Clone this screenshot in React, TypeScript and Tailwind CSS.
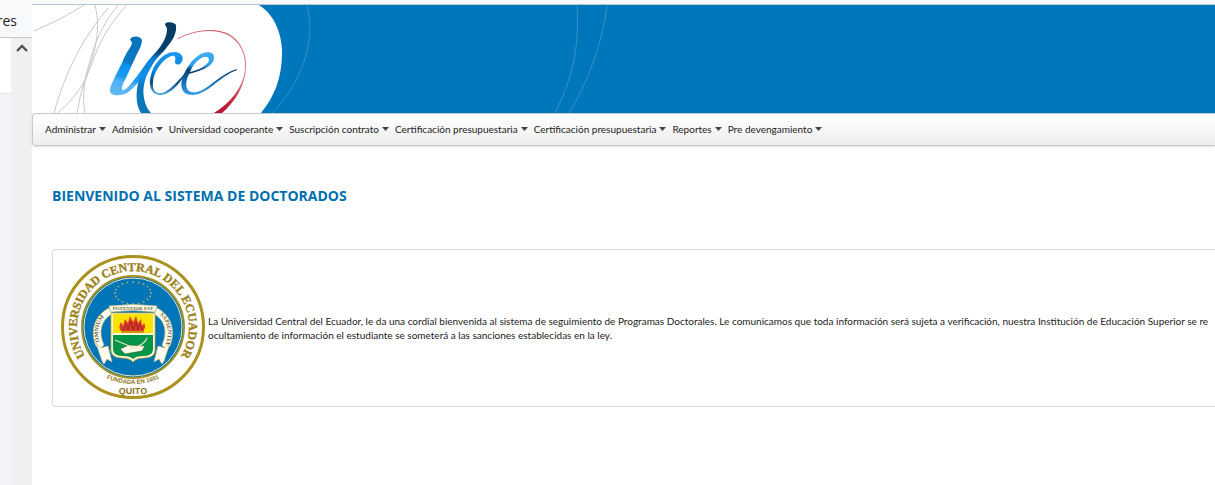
import React from "react";

const menus = [
  "Administrar",
  "Admisión",
  "Universidad cooperante",
  "Suscripción contrato",
  "Certificación presupuestaria",
  "Certificación presupuestaria",
  "Reportes",
  "Pre devengamiento",
];

function Banner() {
  return (
    <svg viewBox="0 0 1183 108" preserveAspectRatio="xMinYMin slice" className="block h-[108px] w-full bg-[#0076bd]" role="img" aria-label="UCE">
      <defs>
        <linearGradient id="stem" x1="0.6" y1="0" x2="0.4" y2="1">
          <stop offset="0" stopColor="#0a72b8" />
          <stop offset=".45" stopColor="#0878c4" />
          <stop offset=".52" stopColor="#0c92ea" />
          <stop offset=".72" stopColor="#1c9cf0" />
          <stop offset=".8" stopColor="#4fb0f4" />
          <stop offset="1" stopColor="#5db8f5" />
        </linearGradient>
        <linearGradient id="tall" x1="0" y1="0" x2="0" y2="1">
          <stop offset="0" stopColor="#063b63" />
          <stop offset=".32" stopColor="#06416c" />
          <stop offset=".4" stopColor="#0a80d4" />
          <stop offset=".6" stopColor="#1290ea" />
          <stop offset=".72" stopColor="#0876b8" />
          <stop offset="1" stopColor="#0876b8" />
        </linearGradient>
        <linearGradient id="curveC" x1="0" y1="0" x2="0" y2="1">
          <stop offset="0" stopColor="#1b98ee" />
          <stop offset=".45" stopColor="#0785dc" />
          <stop offset=".7" stopColor="#0a4a7a" />
          <stop offset="1" stopColor="#4aa8e8" />
        </linearGradient>
        <linearGradient id="curveE" x1="0" y1="0" x2="0" y2="1">
          <stop offset="0" stopColor="#46aef5" />
          <stop offset=".3" stopColor="#2a9fee" />
          <stop offset=".42" stopColor="#063f6c" />
          <stop offset=".6" stopColor="#0a5e9c" />
          <stop offset="1" stopColor="#36a2ee" />
        </linearGradient>
        <linearGradient id="ring" x1="0" y1="0" x2="0" y2="1">
          <stop offset="0" stopColor="#d05562" />
          <stop offset=".15" stopColor="#d9707a" />
          <stop offset=".6" stopColor="#dc7c86" />
          <stop offset=".85" stopColor="#c02a40" />
          <stop offset="1" stopColor="#b5172e" />
        </linearGradient>
      </defs>
      <path d="M0 0H227C243 10 250 30 250 48C250 73 242 92 229 108H0Z" fill="#fff" />
      <path
        d="M2 26C20 18 37 10 52 0M63 0C70 28 61 52 54 72C49 86 47 98 45 108M76 3C50 34 33 68 22 108M86 0C66 25 61 45 54 70C51 84 51 97 53 108M95 0C65 32 62 57 53 75C45 90 36 99 26 108"
        fill="none"
        stroke="#c8c8c8"
      />
      <path d="M275 0C285 39 267 81 240 108M545 0C548 45 539 76 523 108M575 0C570 42 553 82 537 108" fill="none" stroke="#5ca3cc" opacity=".6" />
      <path d="M98 34C101 30 109 31 110 35C110 40 107 45 105 49L93 75C89 82 89 86 92 85C98 82 107 68 117 55L120 57C109 74 99 90 88 90C82 91 77 89 78 84C79 78 89 61 92 53C96 45 99 42 100 38C100 36 98 36 98 34Z" fill="url(#stem)" />
      <path d="M133 19C134 16 143 17 144 20C145 29 140 36 135 42C130 49 125 52 121 59C113 72 110 81 112 93C113 99 115 104 119 108H109C103 99 104 85 107 74C110 62 118 53 125 46C131 39 135 31 135 24C135 22 133 21 133 19Z" fill="url(#tall)" />
      <path d="M149 58C146 61 142 59 143 56C144 53 143 50 140 51C133 52 122 65 121 77C120 88 126 90 133 87C140 83 146 76 153 68L154 69C146 80 139 89 129 90C119 90 116 80 119 70C122 58 132 47 142 47C150 47 153 53 149 58Z" fill="url(#curveC)" />
      <path fillRule="evenodd" d="M158 67C168 65 177 59 177 55C177 51 172 51 168 54C163 57 160 62 158 67ZM157 69C153 77 153 85 159 87C173 90 183 71 205 64V65C186 72 176 90 160 90C148 90 147 78 153 67C158 56 168 47 176 47C184 47 184 56 177 61C171 65 164 67 157 69Z" fill="url(#curveE)" />
      <path d="M146 33C163 25 182 22 197 29C209 36 215 49 214 63C213 81 203 97 190 108H182C198 98 212 82 213 63C214 49 208 37 196 30C181 23 162 26 146 34Z" fill="url(#ring)" />
    </svg>
  );
}

const stars = Array.from({ length: 20 }, (_, i) => ({
  x: 72 + Math.cos((i * Math.PI) / 10) * 18,
  y: 38 + Math.sin((i * Math.PI) / 10) * 11,
}));

function Seal() {
  return (
    <svg viewBox="0 0 144 144" className="size-36 shrink-0" role="img" aria-label="Universidad Central del Ecuador">
      <defs>
        <path id="outer" d="M26 104A56 56 0 1 1 118 104" />
        <path id="founded" d="M40 121Q72 137 104 121" />
        <path id="leftMotto" d="M41 93Q31 71 48 57" />
        <path id="rightMotto" d="M96 57Q113 71 103 93" />
      </defs>
      <circle cx="72" cy="72" r="70.500" fill="#fff" stroke="#aa911d" strokeWidth="3" />
      <circle cx="72" cy="72" r="51" fill="#0075b8" stroke="#aa911d" strokeWidth="2" />
      <circle cx="72" cy="72" r="49" fill="none" stroke="#e9e3bd" />
      <text className="fill-[#9d841c] stroke-[#9d841c] stroke-[0.4] font-['Liberation_Serif',serif] text-[12px] font-bold">
        <textPath href="#outer" startOffset="50%" textAnchor="middle">UNIVERSIDAD CENTRAL DEL ECUADOR</textPath>
      </text>
      <g fill="#a9b55e">
        {stars.map((s, i) => (
          <circle key={i} cx={s.x} cy={s.y} r=".9" />
        ))}
      </g>
      <g fill="#fffdf0" stroke="#c9bf84" strokeWidth=".7">
        <path d="M48 53C33 61 29 76 35 91L40 93L43 90C37 77 40 65 51 59Z" />
        <path d="M96 53C111 61 115 76 109 91L104 93L101 90C107 77 104 65 93 59Z" />
        <path d="M35 88L40 93L47 91L51 107L46 104L43 109L41 106Z" />
        <path d="M109 88L104 93L97 91L93 107L98 104L101 109L103 106Z" />
        <path d="M48 51Q72 48 96 51L94 57Q72 54 50 57Z" />
      </g>
      <path d="M50 58H94V96Q93 103 83 103Q75 103 72 107Q69 103 61 103Q51 103 50 96Z" fill="#fff7d8" stroke="#c7a928" strokeWidth=".8" />
      <path d="M52 59H92V78H52Z" fill="#fbe300" />
      <path d="M52 80H92V95Q91 101 82 101Q75 101 72 104Q69 101 62 101Q53 101 52 95Z" fill="#05954a" />
      <path d="M60 76C57 72 59 70 60 67L62 71L64 64L67 68L69 61L72 67L75 61L77 68L80 64L81 71L83 68C85 71 84 74 82 76Z" fill="#e0382a" />
      <path d="M62 76L65 69L67 75L70 66L72 75L75 67L77 75L79 69L82 76M60 77H83" fill="none" stroke="#8a2a1a" strokeWidth=".8" />
      <path d="M59 94L68 90L84 91L81 96L64 99Z" fill="#fffbe6" stroke="#295d37" strokeWidth=".6" />
      <path d="M54 85L73 93M86 83Q83 91 69 94" fill="none" stroke="#e9e5b8" strokeWidth="1.2" />
      <text className="fill-[#6b6238] font-['Liberation_Serif',serif] text-[6px] font-bold">
        <textPath href="#leftMotto" startOffset="50%" textAnchor="middle">OMNIUM</textPath>
      </text>
      <text className="fill-[#6b6238] font-['Liberation_Serif',serif] text-[6px] font-bold">
        <textPath href="#rightMotto" startOffset="50%" textAnchor="middle">SAPIENTIA</textPath>
      </text>
      <text x="72" y="55" textAnchor="middle" className="fill-[#6b6238] font-['Liberation_Serif',serif] text-[5px] font-bold">POTENTIOR EST</text>
      <text className="fill-[#8b7619] font-['Liberation_Sans',sans-serif] text-[6px] font-bold">
        <textPath href="#founded" startOffset="50%" textAnchor="middle">FUNDADA EN 1651</textPath>
      </text>
      <text x="72" y="139" textAnchor="middle" className="fill-[#8b7619] font-['Liberation_Sans',sans-serif] text-[9px] font-bold">QUITO</text>
    </svg>
  );
}

export default function App() {
  return (
    <div className="flex min-h-screen overflow-hidden bg-white font-[Lato,sans-serif] text-[#222]">
      <aside className="flex w-8 shrink-0 flex-col">
        <div className="flex h-[38px] items-center justify-end overflow-hidden border-b border-[#c9c9cb] bg-[#f8f9fb] pr-[15px] pt-1 font-['Open_Sans',sans-serif] text-sm">res</div>
        <div className="flex flex-1">
          <div className="flex-1 bg-[#f2f4fa]">
            <div className="h-14 border-b border-[#e6e6e8] bg-white" />
          </div>
          <div className="flex w-[21px] items-start justify-center bg-[#f0f0f0] pt-1">
            <button aria-label="Desplazar arriba">
              <svg viewBox="0 0 12 12" className="size-3" fill="none" stroke="#505050" strokeWidth="2.4"><path d="M1 9L6 4L11 9" /></svg>
            </button>
          </div>
        </div>
      </aside>
      <div className="min-w-0 flex-1">
        <header>
          <div className="h-[5px] border-b border-[#b8c4ca] bg-[#f8f9fb]" />
          <Banner />
          <nav className="flex h-[33px] items-center gap-[6px] overflow-hidden whitespace-nowrap rounded-l border border-r-0 border-[#c8c8c8] bg-linear-to-b from-white to-[#eeeeee] pb-px pl-3 shadow-sm">
            {menus.map((m, i) => (
              <button key={i} className="flex shrink-0 items-center gap-[3px] text-[10px] leading-4">
                {m}
                <svg viewBox="0 0 7 4" className="h-1 w-[7px]"><path d="M0 0H7L3.500 4Z" fill="#444" /></svg>
              </button>
            ))}
          </nav>
        </header>
        <main className="pl-5 pt-10">
          <h1 className="font-['Open_Sans',sans-serif] text-sm font-bold text-[#0070b0]">BIENVENIDO AL SISTEMA DE DOCTORADOS</h1>
          <section className="mt-[43px] flex items-center gap-[3px] overflow-hidden rounded-l border border-r-0 border-[#d9d9d9] pb-[7px] pl-2 pt-[5px]">
            <Seal />
            <p className="whitespace-nowrap pt-[2px] text-[10px] leading-[14px]">
              La Universidad Central del Ecuador, le da una cordial bienvenida al sistema de seguimiento de Programas Doctorales. Le comunicamos que toda información será sujeta a verificación, nuestra Institución de Educación Superior se re
              <br />
              ocultamiento de información el estudiante se someterá a las sanciones establecidas en la ley.
            </p>
          </section>
        </main>
      </div>
    </div>
  );
}
